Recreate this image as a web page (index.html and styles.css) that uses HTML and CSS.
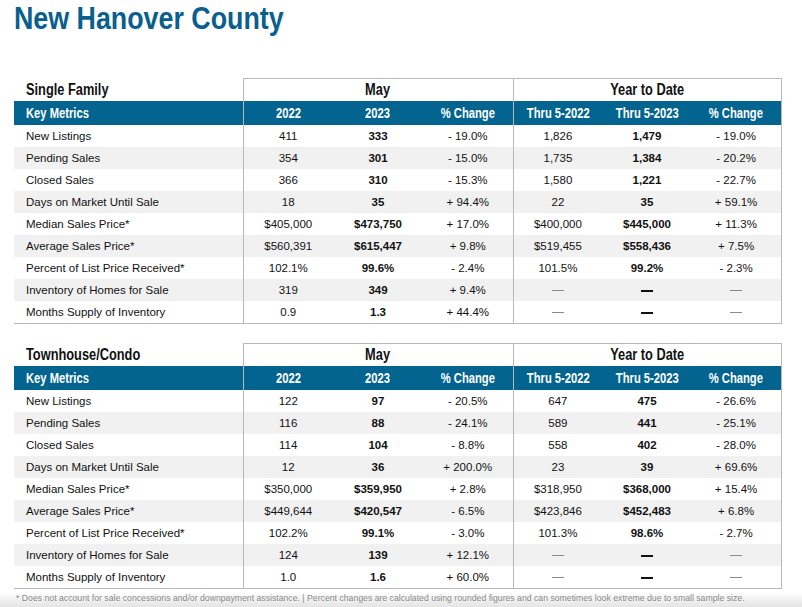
FILE: index.html
```html
<!DOCTYPE html>
<html lang="en">
<head>
<meta charset="utf-8">
<title>New Hanover County</title>
<link rel="stylesheet" href="styles.css">
</head>
<body>
<main class="page">
  <h1 class="title"><span class="cn">New Hanover County</span></h1>

  <table class="metrics first">
    <colgroup>
      <col class="c-label"><col class="c-may"><col class="c-may"><col class="c-may"><col class="c-ytd"><col class="c-ytd"><col class="c-ytd">
    </colgroup>
    <thead>
      <tr class="group">
        <th class="section"><span class="cn">Single Family</span></th>
        <th colspan="3" class="box"><span class="cn">May</span></th>
        <th colspan="3" class="box"><span class="cn">Year to Date</span></th>
      </tr>
      <tr class="band">
        <th class="lbl"><span class="cn">Key Metrics</span></th>
        <th class="start"><span class="cn">2022</span></th><th><span class="cn">2023</span></th><th><span class="cn">% Change</span></th>
        <th class="start"><span class="cn">Thru 5-2022</span></th><th><span class="cn">Thru 5-2023</span></th><th class="end"><span class="cn">% Change</span></th>
      </tr>
    </thead>
    <tbody>
      <tr><td class="lbl">New Listings</td><td class="start">411</td><td class="b">333</td><td>- 19.0%</td><td class="start">1,826</td><td class="b">1,479</td><td class="end">- 19.0%</td></tr>
      <tr><td class="lbl">Pending Sales</td><td class="start">354</td><td class="b">301</td><td>- 15.0%</td><td class="start">1,735</td><td class="b">1,384</td><td class="end">- 20.2%</td></tr>
      <tr><td class="lbl">Closed Sales</td><td class="start">366</td><td class="b">310</td><td>- 15.3%</td><td class="start">1,580</td><td class="b">1,221</td><td class="end">- 22.7%</td></tr>
      <tr><td class="lbl">Days on Market Until Sale</td><td class="start">18</td><td class="b">35</td><td>+ 94.4%</td><td class="start">22</td><td class="b">35</td><td class="end">+ 59.1%</td></tr>
      <tr><td class="lbl">Median Sales Price*</td><td class="start">$405,000</td><td class="b">$473,750</td><td>+ 17.0%</td><td class="start">$400,000</td><td class="b">$445,000</td><td class="end">+ 11.3%</td></tr>
      <tr><td class="lbl">Average Sales Price*</td><td class="start">$560,391</td><td class="b">$615,447</td><td>+ 9.8%</td><td class="start">$519,455</td><td class="b">$558,436</td><td class="end">+ 7.5%</td></tr>
      <tr><td class="lbl">Percent of List Price Received*</td><td class="start">102.1%</td><td class="b">99.6%</td><td>- 2.4%</td><td class="start">101.5%</td><td class="b">99.2%</td><td class="end">- 2.3%</td></tr>
      <tr><td class="lbl">Inventory of Homes for Sale</td><td class="start">319</td><td class="b">349</td><td>+ 9.4%</td><td class="start"><span class="dash"></span></td><td class="b"><span class="dash"></span></td><td class="end"><span class="dash"></span></td></tr>
      <tr><td class="lbl">Months Supply of Inventory</td><td class="start">0.9</td><td class="b">1.3</td><td>+ 44.4%</td><td class="start"><span class="dash"></span></td><td class="b"><span class="dash"></span></td><td class="end"><span class="dash"></span></td></tr>
    </tbody>
  </table>

  <table class="metrics second">
    <colgroup>
      <col class="c-label"><col class="c-may"><col class="c-may"><col class="c-may"><col class="c-ytd"><col class="c-ytd"><col class="c-ytd">
    </colgroup>
    <thead>
      <tr class="group">
        <th class="section"><span class="cn">Townhouse/Condo</span></th>
        <th colspan="3" class="box"><span class="cn">May</span></th>
        <th colspan="3" class="box"><span class="cn">Year to Date</span></th>
      </tr>
      <tr class="band">
        <th class="lbl"><span class="cn">Key Metrics</span></th>
        <th class="start"><span class="cn">2022</span></th><th><span class="cn">2023</span></th><th><span class="cn">% Change</span></th>
        <th class="start"><span class="cn">Thru 5-2022</span></th><th><span class="cn">Thru 5-2023</span></th><th class="end"><span class="cn">% Change</span></th>
      </tr>
    </thead>
    <tbody>
      <tr><td class="lbl">New Listings</td><td class="start">122</td><td class="b">97</td><td>- 20.5%</td><td class="start">647</td><td class="b">475</td><td class="end">- 26.6%</td></tr>
      <tr><td class="lbl">Pending Sales</td><td class="start">116</td><td class="b">88</td><td>- 24.1%</td><td class="start">589</td><td class="b">441</td><td class="end">- 25.1%</td></tr>
      <tr><td class="lbl">Closed Sales</td><td class="start">114</td><td class="b">104</td><td>- 8.8%</td><td class="start">558</td><td class="b">402</td><td class="end">- 28.0%</td></tr>
      <tr><td class="lbl">Days on Market Until Sale</td><td class="start">12</td><td class="b">36</td><td>+ 200.0%</td><td class="start">23</td><td class="b">39</td><td class="end">+ 69.6%</td></tr>
      <tr><td class="lbl">Median Sales Price*</td><td class="start">$350,000</td><td class="b">$359,950</td><td>+ 2.8%</td><td class="start">$318,950</td><td class="b">$368,000</td><td class="end">+ 15.4%</td></tr>
      <tr><td class="lbl">Average Sales Price*</td><td class="start">$449,644</td><td class="b">$420,547</td><td>- 6.5%</td><td class="start">$423,846</td><td class="b">$452,483</td><td class="end">+ 6.8%</td></tr>
      <tr><td class="lbl">Percent of List Price Received*</td><td class="start">102.2%</td><td class="b">99.1%</td><td>- 3.0%</td><td class="start">101.3%</td><td class="b">98.6%</td><td class="end">- 2.7%</td></tr>
      <tr><td class="lbl">Inventory of Homes for Sale</td><td class="start">124</td><td class="b">139</td><td>+ 12.1%</td><td class="start"><span class="dash"></span></td><td class="b"><span class="dash"></span></td><td class="end"><span class="dash"></span></td></tr>
      <tr><td class="lbl">Months Supply of Inventory</td><td class="start">1.0</td><td class="b">1.6</td><td>+ 60.0%</td><td class="start"><span class="dash"></span></td><td class="b"><span class="dash"></span></td><td class="end"><span class="dash"></span></td></tr>
    </tbody>
  </table>

  <p class="note">* Does not account for sale concessions and/or downpayment assistance. | Percent changes are calculated using rounded figures and can sometimes look extreme due to small sample size.</p>
</main>
</body>
</html>
```
FILE: styles.css
```css
html, body {
  margin: 0;
  padding: 0;
}
body {
  background: linear-gradient(to bottom, #ffffff 0, #ffffff 592px, #e4e4e4 607px);
  min-height: 607px;
  font-family: "Liberation Sans", Arial, sans-serif;
  color: #111;
}
.page {
  padding: 0 21px 0 14px;
}
.cn {
  display: inline-block;
  transform: scaleX(0.8);
  transform-origin: center;
}
.title {
  margin: 0;
  padding-top: 2px;
  height: 35px;
  font-family: "Liberation Sans", Arial, sans-serif;
  font-weight: 700;
  font-size: 31px;
  line-height: 34px;
  color: #0a5f8f;
}
.title .cn {
  transform: scaleX(0.865);
  transform-origin: left center;
}
.metrics {
  width: 767px;
  table-layout: fixed;
  border-collapse: collapse;
  border-spacing: 0;
}
.metrics.first { margin-top: 41px; }
.metrics.second { margin-top: 19px; }
.c-label { width: 229px; }
.c-may { width: 90px; }
.c-ytd { width: 89.33px; }

.metrics th, .metrics td {
  padding: 0;
  text-align: center;
  white-space: nowrap;
}
.group th {
  height: 20px;
  font-weight: 700;
  font-size: 16px;
  color: #111;
  vertical-align: bottom;
  padding-bottom: 2px;
  line-height: 18px;
}
.group th.section {
  text-align: left;
  padding-left: 12px;
}
.group th.section .cn,
.band th.lbl .cn {
  transform-origin: left center;
}
.group th.box {
  border: 1px solid #b8b8b8;
  border-bottom: 0;
}
.band th {
  height: 24px;
  background: #03648f;
  color: #fff;
  font-weight: 700;
  font-size: 14px;
  line-height: 16px;
}
.band th.lbl {
  text-align: left;
  padding-left: 12px;
}
.metrics td {
  height: 22px;
  font-size: 11.5px;
  line-height: 14px;
  color: #111;
}
.metrics td.lbl {
  text-align: left;
  padding-left: 12px;
}
.metrics td.b {
  font-weight: 700;
}
.metrics .start { border-left: 1px solid #b8b8b8; }
.metrics .end { border-right: 1px solid #b8b8b8; }
.metrics tbody tr:nth-child(even) td { background: #f1f1f1; }
.metrics tbody tr:last-child td { border-bottom: 1px solid #b8b8b8; }

.dash {
  display: inline-block;
  width: 12px;
  height: 1px;
  background: #8a8a8a;
  vertical-align: middle;
}
td.b .dash {
  height: 2px;
  background: #111;
}

.note {
  margin: 4px 0 0 2px;
  font-size: 8.7px;
  line-height: 10px;
  color: #8a8a8a;
  white-space: nowrap;
}
```
